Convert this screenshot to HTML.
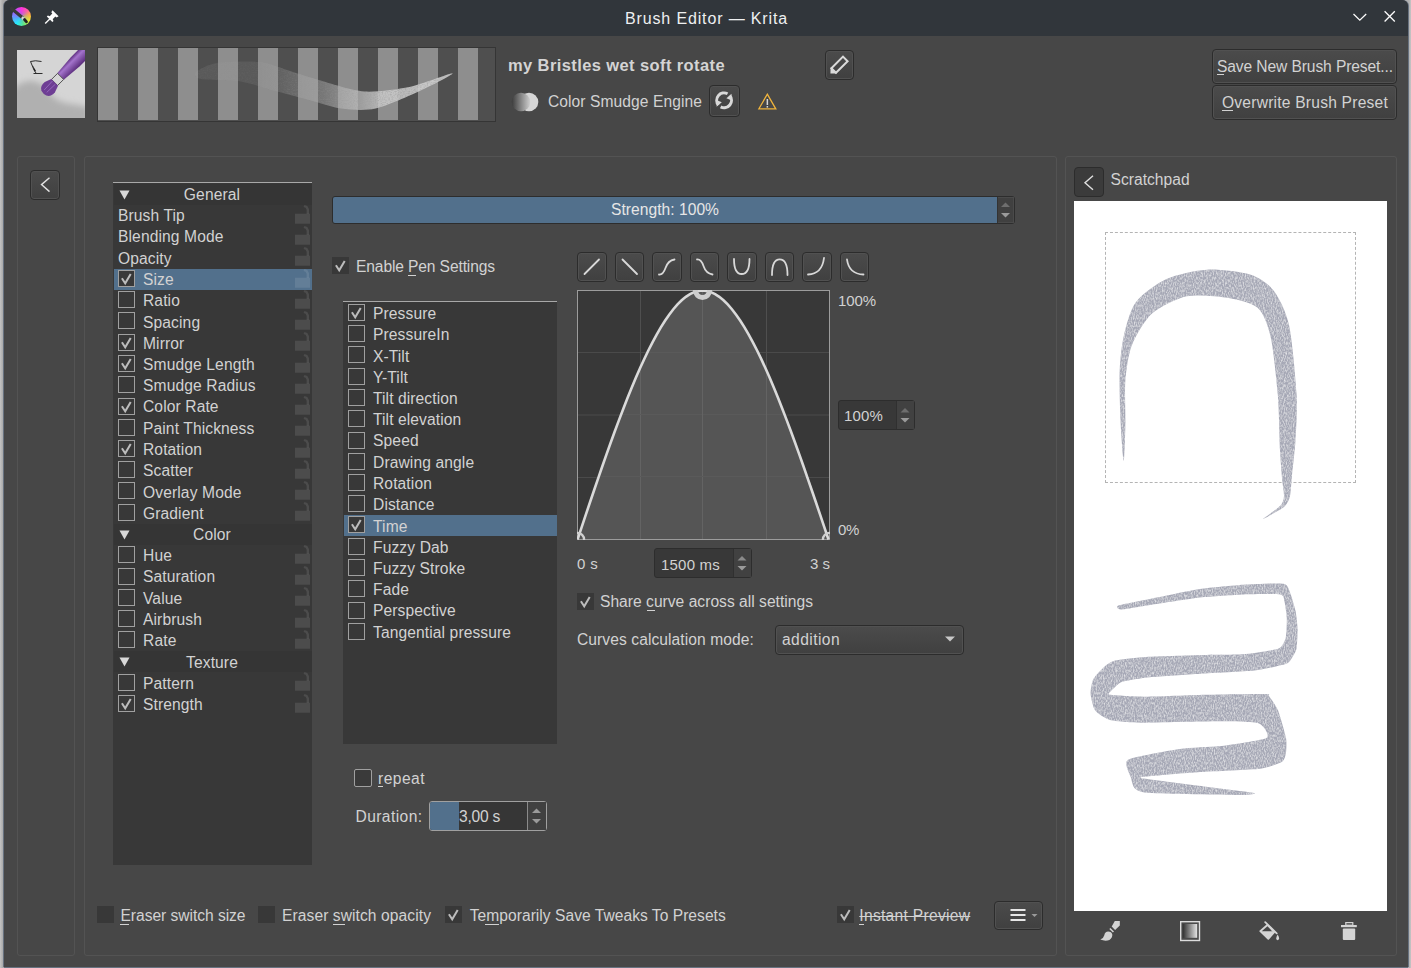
<!DOCTYPE html><html><head><meta charset="utf-8"><style>
html,body{margin:0;padding:0;}
body{width:1411px;height:968px;position:relative;overflow:hidden;background:linear-gradient(90deg,#c4c4c4 0,#a9a9a9 3px,#b0b0b0 1409px,#c6c6c6 1411px);font-family:"Liberation Sans",sans-serif;}
.t{position:absolute;white-space:nowrap;line-height:1;}
.btn{position:absolute;box-sizing:border-box;border:1px solid #2c2c2c;border-radius:4px;background:linear-gradient(#4b4b4b,#404040);box-shadow:inset 0 0 0 1px #515151;}
.cb{position:absolute;box-sizing:border-box;width:17px;height:17px;border:1px solid #a0a0a0;background:#383838;}
.cbd{position:absolute;box-sizing:border-box;width:17px;height:17px;background:#383838;}
.frame{position:absolute;box-sizing:border-box;border:1px solid #535353;border-radius:3px;}
svg{position:absolute;overflow:visible;}
.ul{position:absolute;height:1px;background:#d2d2d2;}
</style></head><body>
<div style="position:absolute;left:4px;top:0px;width:1404px;height:967px;background:#474747;border-radius:6px 6px 0 0;box-shadow:-1px 0 0 #687280, 1px 0 0 #687280, 0 1px 0 #687280;"></div>
<div style="position:absolute;left:4px;top:0px;width:1404px;height:36px;background:#31363b;border-radius:6px 6px 0 0;"></div>
<div class="t" style="left:625.00px;top:11px;font-size:16px;color:#eef0f1;font-weight:normal;letter-spacing:0.859px;">Brush Editor — Krita</div>
<div style="position:absolute;left:12px;top:7px;width:19px;height:19px;border-radius:50%;background:radial-gradient(circle at 50% 55%, rgba(90,150,230,0.55) 0, rgba(90,150,230,0) 60%),conic-gradient(#ff30e0 0deg,#ff60a0 45deg,#ffb040 80deg,#e8f030 120deg,#60f080 165deg,#20f0ff 215deg,#60a0ff 260deg,#a060ff 300deg,#ff30e0 360deg);"></div>
<svg style="left:0px;top:0px;" width="60" height="40" viewBox="0 0 60 40"><line x1="11.5" y1="8.5" x2="22" y2="17.3" stroke="#3a3a3a" stroke-width="3.2" stroke-linecap="round"/><line x1="21.8" y1="17.2" x2="24.2" y2="19.2" stroke="#d8d8d8" stroke-width="2.6"/><line x1="24.5" y1="19.5" x2="26.5" y2="21.8" stroke="#202020" stroke-width="2.8" stroke-linecap="round"/></svg>
<svg style="left:44px;top:9px;" width="16" height="16" viewBox="0 0 16 16"><path d="M8.5 1.2 L14.6 7.3 L12.6 8.6 L11.3 7.6 L8.7 10.2 L9.5 12 L8.3 13.1 L2.8 7.6 L3.9 6.4 L5.7 7.2 L8.3 4.6 L7.3 3.3 Z" fill="#fcfcfc"/><line x1="1.2" y1="14.5" x2="6" y2="9.8" stroke="#fcfcfc" stroke-width="1.4"/></svg>
<svg style="left:1350px;top:10px;" width="60" height="20" viewBox="0 0 60 20"><polyline points="3.5,4 9.8,10.2 16.2,4" fill="none" stroke="#fcfcfc" stroke-width="1.3"/><path d="M34.6 1.3 L44.8 11.5 M44.8 1.3 L34.6 11.5" stroke="#fcfcfc" stroke-width="1.3"/></svg>
<svg style="left:17px;top:50px" width="68" height="68" viewBox="0 0 68 68">
<defs>
<filter id="blur3" x="-20%" y="-20%" width="140%" height="140%"><feGaussianBlur stdDeviation="3"/></filter>
<linearGradient id="ph2" x1="0" y1="0" x2="0" y2="1"><stop offset="0" stop-color="#5e2f80"/><stop offset="0.3" stop-color="#a474cc"/><stop offset="1" stop-color="#5a2c7c"/></linearGradient><linearGradient id="ph" x1="0" y1="1" x2="1" y2="0"><stop offset="0" stop-color="#5e2f80"/><stop offset="0.45" stop-color="#9a68c2"/><stop offset="1" stop-color="#6a3a8c"/></linearGradient>
<clipPath id="tclip"><rect width="68" height="68"/></clipPath>
</defs>
<g clip-path="url(#tclip)">
<rect width="68" height="68" fill="#d5d5d5"/>
<path d="M-5 75 L-5 40 Q4 30 16 31 Q27 33 32 42 Q37 50 48 53 Q60 55 72 57 L72 75 Z" fill="#b0b0b0" filter="url(#blur3)"/>
<g transform="translate(26.5 43.5) rotate(-45)">
<path d="M24 -4.6 L45 -6.3 L75 -6.3 L75 6.3 L45 6.3 L24 4.6 Z" fill="url(#ph2)"/>
<rect x="15.6" y="-4.3" width="8.6" height="8.6" fill="#d6d6d6" stroke="#4a4a4a" stroke-width="0.9"/>
<path d="M0.5 -3.5 Q2.5 -7.8 9 -7.2 L15.8 -4.8 L15.8 4.8 L9 7.2 Q2.5 7.8 0.5 3.5 Q-0.5 0 0.5 -3.5 Z" fill="#6e3e94"/>
<path d="M3 -2 L15 -2.5 M3 1.5 L15 1.8" stroke="#9a70c0" stroke-width="0.8"/>
</g>
<path d="M13.5 11.5 Q18 10 24.5 11.5 M13.5 11.5 L17 20 L19 23 M16.5 23.5 L25.5 23.5" stroke="#1a1a1a" stroke-width="0.9" fill="none"/>
<path d="M15.5 15 L19 21 L17.5 21.5 Z" fill="#1a1a1a"/>
</g></svg>
<svg style="left:97px;top:47px" width="399" height="75" viewBox="0 0 399 75">
<defs><filter id="pgrain" x="0" y="0" width="399" height="75" filterUnits="userSpaceOnUse"><feTurbulence type="fractalNoise" baseFrequency="0.6 0.9" numOctaves="2" seed="7" result="n"/><feColorMatrix in="n" type="matrix" values="0 0 0 0 0.3  0 0 0 0 0.3  0 0 0 0 0.3  0 0 0 -1.5 0.9" result="w"/><feComposite in="w" in2="SourceGraphic" operator="in" result="wm"/><feMerge><feMergeNode in="SourceGraphic"/><feMergeNode in="wm"/></feMerge></filter><linearGradient id="sg" x1="0" y1="0" x2="1" y2="0"><stop offset="0.25" stop-color="#a8a8a8" stop-opacity="0.12"/><stop offset="0.5" stop-color="#b4b4b4" stop-opacity="0.4"/><stop offset="0.72" stop-color="#cacaca" stop-opacity="0.85"/><stop offset="0.9" stop-color="#d2d2d2" stop-opacity="0.85"/></linearGradient></defs>
<rect x="0.5" y="0.5" width="398" height="74" fill="#4f4f4f" stroke="#353535"/>
<rect x="1" y="1" width="20" height="72" fill="#8e8e8e"/><rect x="41" y="1" width="20" height="72" fill="#8e8e8e"/><rect x="81" y="1" width="20" height="72" fill="#8e8e8e"/><rect x="121" y="1" width="20" height="72" fill="#8e8e8e"/><rect x="161" y="1" width="20" height="72" fill="#8e8e8e"/><rect x="201" y="1" width="20" height="72" fill="#8e8e8e"/><rect x="241" y="1" width="20" height="72" fill="#8e8e8e"/><rect x="281" y="1" width="20" height="72" fill="#8e8e8e"/><rect x="321" y="1" width="20" height="72" fill="#8e8e8e"/><rect x="361" y="1" width="20" height="72" fill="#8e8e8e"/>
<path d="M99.0 25.0 C101.1 22.9 111.2 17.3 119.7 16.0 C128.2 14.7 153.6 14.1 163.0 15.0 C172.4 15.9 182.2 20.6 190.0 23.0 C197.8 25.4 211.4 30.1 221.7 33.0 C232.0 35.9 254.9 43.6 267.0 44.5 C279.1 45.4 300.6 42.4 312.4 40.0 C324.2 37.6 354.0 25.8 355.5 26.3 C357.0 26.8 334.1 38.7 323.8 43.4 C313.5 48.1 289.0 59.1 278.4 61.5 C267.8 63.9 253.5 62.7 244.4 61.5 C235.3 60.3 219.5 54.8 210.4 52.4 C201.3 50.0 185.5 45.8 176.4 43.4 C167.3 41.0 152.1 35.8 142.4 34.3 C132.7 32.8 109.6 33.2 103.8 32.0 C98.0 30.8 96.9 27.1 99.0 25.0 Z" fill="url(#sg)" filter="url(#pgrain)"/>
</svg>
<div class="t" style="left:508.00px;top:57px;font-size:16.5px;color:#d4d4d4;font-weight:bold;letter-spacing:0.396px;">my Bristles wet soft rotate</div>
<svg style="left:511px;top:92px" width="28" height="20" viewBox="0 0 28 20">
<defs><linearGradient id="eg" x1="0" x2="1"><stop offset="0" stop-color="#3c3c3c"/><stop offset="1" stop-color="#d0d0d0"/></linearGradient></defs>
<circle cx="18" cy="10" r="9.3" fill="#d6d6d6"/><circle cx="10" cy="10" r="9.3" fill="url(#eg)"/></svg>
<div class="t" style="left:548.00px;top:94px;font-size:15.6px;color:#d2d2d2;font-weight:normal;letter-spacing:0.075px;">Color Smudge Engine</div>
<div class="btn" style="left:825px;top:50px;width:29px;height:30px"></div>
<svg style="left:825px;top:50px;" width="29" height="30" viewBox="0 0 29 30"><path d="M6.4 18.2 L18 6.6 L22.6 11.2 L11 22.8 Z" fill="none" stroke="#dadada" stroke-width="2" stroke-linejoin="miter"/><path d="M5.4 23.6 L5.6 17.4 L11.6 23.4 Z" fill="#dadada"/></svg>
<div class="btn" style="left:709px;top:85px;width:31px;height:32px"></div>
<svg style="left:709px;top:85px;" width="31" height="32" viewBox="0 0 31 32"><path d="M18.57 8.77 A7.4 7.4 0 0 0 9.43 20.06" fill="none" stroke="#d8d8d8" stroke-width="3"/><path d="M11.63 21.83 A7.4 7.4 0 0 0 20.77 10.54" fill="none" stroke="#d8d8d8" stroke-width="3"/><path d="M7.5 21.8 L12.8 17.3 L8.6 15.6 Z" fill="#d8d8d8"/><path d="M22.7 8.8 L17.4 13.3 L21.6 15 Z" fill="#d8d8d8"/></svg>
<svg style="left:758px;top:93px;" width="19" height="17" viewBox="0 0 19 17"><path d="M9.3 1.2 L17.8 15.8 L0.9 15.8 Z" fill="none" stroke="#f0b43c" stroke-width="1.3"/><rect x="8.6" y="6" width="1.5" height="6" fill="#d8d8d8"/><rect x="8.6" y="13" width="1.5" height="1.6" fill="#d8d8d8"/></svg>
<div class="btn" style="left:1212px;top:49px;width:185px;height:35px"></div>
<div class="t" style="left:1217.00px;top:59px;font-size:15.6px;color:#d2d2d2;font-weight:normal;letter-spacing:-0.106px;">Save New Brush Preset...</div>
<div class="ul" style="left:1217px;top:74px;width:7px"></div>
<div class="btn" style="left:1212px;top:85px;width:185px;height:35px"></div>
<div class="t" style="left:1222.00px;top:95px;font-size:15.6px;color:#d2d2d2;font-weight:normal;letter-spacing:0.219px;">Overwrite Brush Preset</div>
<div class="ul" style="left:1222px;top:110px;width:11px"></div>
<div class="frame" style="left:17px;top:156px;width:58px;height:800px"></div>
<div class="frame" style="left:84px;top:156px;width:973px;height:800px"></div>
<div class="frame" style="left:1065px;top:156px;width:332px;height:800px"></div>
<div class="btn" style="left:30px;top:170px;width:30px;height:30px"></div>
<svg style="left:30px;top:170px;" width="30" height="30" viewBox="0 0 30 30"><polyline points="19.5,7.8 11.5,14.6 19.5,21.6" fill="none" stroke="#e0e0e0" stroke-width="1.4"/></svg>
<div style="position:absolute;left:113px;top:182px;width:199px;height:683px;background:#383838;box-shadow:inset 0 1px 0 #a8a8a8"></div>
<div style="position:absolute;left:114px;top:184px;width:198px;height:21px;background:#353535"></div>
<svg style="left:119px;top:189.7px;" width="11" height="10" viewBox="0 0 11 10"><path d="M0.5 0.5 H10.5 L5.5 9.5 Z" fill="#d8d8d8"/></svg>
<div class="t" style="left:212.00px;top:187px;font-size:15.6px;color:#d2d2d2;font-weight:normal;letter-spacing:0.119px;transform:translateX(-50%)">General</div>
<div class="t" style="left:118.00px;top:208px;font-size:15.6px;color:#d2d2d2;font-weight:normal;letter-spacing:0.110px;">Brush Tip</div>
<svg style="left:295px;top:205px;" width="15" height="19" viewBox="0 0 15 19"><rect x="0" y="8.7" width="15" height="10" fill="rgba(255,255,255,0.1)"/><path d="M9 1 L11.5 2 L12.8 4.5 L12.8 9" fill="none" stroke="rgba(255,255,255,0.1)" stroke-width="2.4"/></svg>
<div class="t" style="left:118.00px;top:229px;font-size:15.6px;color:#d2d2d2;font-weight:normal;letter-spacing:0.120px;">Blending Mode</div>
<svg style="left:295px;top:226px;" width="15" height="19" viewBox="0 0 15 19"><rect x="0" y="8.7" width="15" height="10" fill="rgba(255,255,255,0.1)"/><path d="M9 1 L11.5 2 L12.8 4.5 L12.8 9" fill="none" stroke="rgba(255,255,255,0.1)" stroke-width="2.4"/></svg>
<div class="t" style="left:118.00px;top:251px;font-size:15.6px;color:#d2d2d2;font-weight:normal;letter-spacing:0.113px;">Opacity</div>
<svg style="left:295px;top:247px;" width="15" height="19" viewBox="0 0 15 19"><rect x="0" y="8.7" width="15" height="10" fill="rgba(255,255,255,0.1)"/><path d="M9 1 L11.5 2 L12.8 4.5 L12.8 9" fill="none" stroke="rgba(255,255,255,0.1)" stroke-width="2.4"/></svg>
<div style="position:absolute;left:114px;top:269px;width:198px;height:21px;background:#52708c"></div>
<div class="cb" style="left:118px;top:270px"></div>
<svg style="left:118px;top:270px;" width="17" height="17" viewBox="0 0 17 17"><polyline points="3.9,8.3 7.2,13.3 12.7,3.9" fill="none" stroke="#bcbcbc" stroke-width="2"/></svg>
<div class="t" style="left:143.00px;top:272px;font-size:15.6px;color:#d2d2d2;font-weight:normal;letter-spacing:0.114px;">Size</div>
<svg style="left:295px;top:269px;" width="15" height="19" viewBox="0 0 15 19"><rect x="0" y="8.7" width="15" height="10" fill="rgba(255,255,255,0.1)"/><path d="M9 1 L11.5 2 L12.8 4.5 L12.8 9" fill="none" stroke="rgba(255,255,255,0.1)" stroke-width="2.4"/></svg>
<div class="cb" style="left:118px;top:291px"></div>
<div class="t" style="left:143.00px;top:293px;font-size:15.6px;color:#d2d2d2;font-weight:normal;letter-spacing:0.109px;">Ratio</div>
<svg style="left:295px;top:290px;" width="15" height="19" viewBox="0 0 15 19"><rect x="0" y="8.7" width="15" height="10" fill="rgba(255,255,255,0.1)"/><path d="M9 1 L11.5 2 L12.8 4.5 L12.8 9" fill="none" stroke="rgba(255,255,255,0.1)" stroke-width="2.4"/></svg>
<div class="cb" style="left:118px;top:312px"></div>
<div class="t" style="left:143.00px;top:315px;font-size:15.6px;color:#d2d2d2;font-weight:normal;letter-spacing:0.121px;">Spacing</div>
<svg style="left:295px;top:311px;" width="15" height="19" viewBox="0 0 15 19"><rect x="0" y="8.7" width="15" height="10" fill="rgba(255,255,255,0.1)"/><path d="M9 1 L11.5 2 L12.8 4.5 L12.8 9" fill="none" stroke="rgba(255,255,255,0.1)" stroke-width="2.4"/></svg>
<div class="cb" style="left:118px;top:334px"></div>
<svg style="left:118px;top:334px;" width="17" height="17" viewBox="0 0 17 17"><polyline points="3.9,8.3 7.2,13.3 12.7,3.9" fill="none" stroke="#bcbcbc" stroke-width="2"/></svg>
<div class="t" style="left:143.00px;top:336px;font-size:15.6px;color:#d2d2d2;font-weight:normal;letter-spacing:0.102px;">Mirror</div>
<svg style="left:295px;top:332px;" width="15" height="19" viewBox="0 0 15 19"><rect x="0" y="8.7" width="15" height="10" fill="rgba(255,255,255,0.1)"/><path d="M9 1 L11.5 2 L12.8 4.5 L12.8 9" fill="none" stroke="rgba(255,255,255,0.1)" stroke-width="2.4"/></svg>
<div class="cb" style="left:118px;top:355px"></div>
<svg style="left:118px;top:355px;" width="17" height="17" viewBox="0 0 17 17"><polyline points="3.9,8.3 7.2,13.3 12.7,3.9" fill="none" stroke="#bcbcbc" stroke-width="2"/></svg>
<div class="t" style="left:143.00px;top:357px;font-size:15.6px;color:#d2d2d2;font-weight:normal;letter-spacing:0.127px;">Smudge Length</div>
<svg style="left:295px;top:354px;" width="15" height="19" viewBox="0 0 15 19"><rect x="0" y="8.7" width="15" height="10" fill="rgba(255,255,255,0.1)"/><path d="M9 1 L11.5 2 L12.8 4.5 L12.8 9" fill="none" stroke="rgba(255,255,255,0.1)" stroke-width="2.4"/></svg>
<div class="cb" style="left:118px;top:376px"></div>
<div class="t" style="left:143.00px;top:378px;font-size:15.6px;color:#d2d2d2;font-weight:normal;letter-spacing:0.128px;">Smudge Radius</div>
<svg style="left:295px;top:375px;" width="15" height="19" viewBox="0 0 15 19"><rect x="0" y="8.7" width="15" height="10" fill="rgba(255,255,255,0.1)"/><path d="M9 1 L11.5 2 L12.8 4.5 L12.8 9" fill="none" stroke="rgba(255,255,255,0.1)" stroke-width="2.4"/></svg>
<div class="cb" style="left:118px;top:398px"></div>
<svg style="left:118px;top:398px;" width="17" height="17" viewBox="0 0 17 17"><polyline points="3.9,8.3 7.2,13.3 12.7,3.9" fill="none" stroke="#bcbcbc" stroke-width="2"/></svg>
<div class="t" style="left:143.00px;top:399px;font-size:15.6px;color:#d2d2d2;font-weight:normal;letter-spacing:0.112px;">Color Rate</div>
<svg style="left:295px;top:396px;" width="15" height="19" viewBox="0 0 15 19"><rect x="0" y="8.7" width="15" height="10" fill="rgba(255,255,255,0.1)"/><path d="M9 1 L11.5 2 L12.8 4.5 L12.8 9" fill="none" stroke="rgba(255,255,255,0.1)" stroke-width="2.4"/></svg>
<div class="cb" style="left:118px;top:419px"></div>
<div class="t" style="left:143.00px;top:421px;font-size:15.6px;color:#d2d2d2;font-weight:normal;letter-spacing:0.110px;">Paint Thickness</div>
<svg style="left:295px;top:417px;" width="15" height="19" viewBox="0 0 15 19"><rect x="0" y="8.7" width="15" height="10" fill="rgba(255,255,255,0.1)"/><path d="M9 1 L11.5 2 L12.8 4.5 L12.8 9" fill="none" stroke="rgba(255,255,255,0.1)" stroke-width="2.4"/></svg>
<div class="cb" style="left:118px;top:440px"></div>
<svg style="left:118px;top:440px;" width="17" height="17" viewBox="0 0 17 17"><polyline points="3.9,8.3 7.2,13.3 12.7,3.9" fill="none" stroke="#bcbcbc" stroke-width="2"/></svg>
<div class="t" style="left:143.00px;top:442px;font-size:15.6px;color:#d2d2d2;font-weight:normal;letter-spacing:0.109px;">Rotation</div>
<svg style="left:295px;top:439px;" width="15" height="19" viewBox="0 0 15 19"><rect x="0" y="8.7" width="15" height="10" fill="rgba(255,255,255,0.1)"/><path d="M9 1 L11.5 2 L12.8 4.5 L12.8 9" fill="none" stroke="rgba(255,255,255,0.1)" stroke-width="2.4"/></svg>
<div class="cb" style="left:118px;top:461px"></div>
<div class="t" style="left:143.00px;top:463px;font-size:15.6px;color:#d2d2d2;font-weight:normal;letter-spacing:0.106px;">Scatter</div>
<svg style="left:295px;top:460px;" width="15" height="19" viewBox="0 0 15 19"><rect x="0" y="8.7" width="15" height="10" fill="rgba(255,255,255,0.1)"/><path d="M9 1 L11.5 2 L12.8 4.5 L12.8 9" fill="none" stroke="rgba(255,255,255,0.1)" stroke-width="2.4"/></svg>
<div class="cb" style="left:118px;top:482px"></div>
<div class="t" style="left:143.00px;top:485px;font-size:15.6px;color:#d2d2d2;font-weight:normal;letter-spacing:0.121px;">Overlay Mode</div>
<svg style="left:295px;top:481px;" width="15" height="19" viewBox="0 0 15 19"><rect x="0" y="8.7" width="15" height="10" fill="rgba(255,255,255,0.1)"/><path d="M9 1 L11.5 2 L12.8 4.5 L12.8 9" fill="none" stroke="rgba(255,255,255,0.1)" stroke-width="2.4"/></svg>
<div class="cb" style="left:118px;top:504px"></div>
<div class="t" style="left:143.00px;top:506px;font-size:15.6px;color:#d2d2d2;font-weight:normal;letter-spacing:0.112px;">Gradient</div>
<svg style="left:295px;top:502px;" width="15" height="19" viewBox="0 0 15 19"><rect x="0" y="8.7" width="15" height="10" fill="rgba(255,255,255,0.1)"/><path d="M9 1 L11.5 2 L12.8 4.5 L12.8 9" fill="none" stroke="rgba(255,255,255,0.1)" stroke-width="2.4"/></svg>
<div style="position:absolute;left:114px;top:524px;width:198px;height:21px;background:#353535"></div>
<svg style="left:119px;top:529.7px;" width="11" height="10" viewBox="0 0 11 10"><path d="M0.5 0.5 H10.5 L5.5 9.5 Z" fill="#d8d8d8"/></svg>
<div class="t" style="left:212.00px;top:527px;font-size:15.6px;color:#d2d2d2;font-weight:normal;letter-spacing:0.112px;transform:translateX(-50%)">Color</div>
<div class="cb" style="left:118px;top:546px"></div>
<div class="t" style="left:143.00px;top:548px;font-size:15.6px;color:#d2d2d2;font-weight:normal;letter-spacing:0.143px;">Hue</div>
<svg style="left:295px;top:545px;" width="15" height="19" viewBox="0 0 15 19"><rect x="0" y="8.7" width="15" height="10" fill="rgba(255,255,255,0.1)"/><path d="M9 1 L11.5 2 L12.8 4.5 L12.8 9" fill="none" stroke="rgba(255,255,255,0.1)" stroke-width="2.4"/></svg>
<div class="cb" style="left:118px;top:568px"></div>
<div class="t" style="left:143.00px;top:569px;font-size:15.6px;color:#d2d2d2;font-weight:normal;letter-spacing:0.107px;">Saturation</div>
<svg style="left:295px;top:566px;" width="15" height="19" viewBox="0 0 15 19"><rect x="0" y="8.7" width="15" height="10" fill="rgba(255,255,255,0.1)"/><path d="M9 1 L11.5 2 L12.8 4.5 L12.8 9" fill="none" stroke="rgba(255,255,255,0.1)" stroke-width="2.4"/></svg>
<div class="cb" style="left:118px;top:589px"></div>
<div class="t" style="left:143.00px;top:591px;font-size:15.6px;color:#d2d2d2;font-weight:normal;letter-spacing:0.116px;">Value</div>
<svg style="left:295px;top:587px;" width="15" height="19" viewBox="0 0 15 19"><rect x="0" y="8.7" width="15" height="10" fill="rgba(255,255,255,0.1)"/><path d="M9 1 L11.5 2 L12.8 4.5 L12.8 9" fill="none" stroke="rgba(255,255,255,0.1)" stroke-width="2.4"/></svg>
<div class="cb" style="left:118px;top:610px"></div>
<div class="t" style="left:143.00px;top:612px;font-size:15.6px;color:#d2d2d2;font-weight:normal;letter-spacing:0.109px;">Airbrush</div>
<svg style="left:295px;top:609px;" width="15" height="19" viewBox="0 0 15 19"><rect x="0" y="8.7" width="15" height="10" fill="rgba(255,255,255,0.1)"/><path d="M9 1 L11.5 2 L12.8 4.5 L12.8 9" fill="none" stroke="rgba(255,255,255,0.1)" stroke-width="2.4"/></svg>
<div class="cb" style="left:118px;top:631px"></div>
<div class="t" style="left:143.00px;top:633px;font-size:15.6px;color:#d2d2d2;font-weight:normal;letter-spacing:0.124px;">Rate</div>
<svg style="left:295px;top:630px;" width="15" height="19" viewBox="0 0 15 19"><rect x="0" y="8.7" width="15" height="10" fill="rgba(255,255,255,0.1)"/><path d="M9 1 L11.5 2 L12.8 4.5 L12.8 9" fill="none" stroke="rgba(255,255,255,0.1)" stroke-width="2.4"/></svg>
<div style="position:absolute;left:114px;top:651px;width:198px;height:21px;background:#353535"></div>
<svg style="left:119px;top:657.2px;" width="11" height="10" viewBox="0 0 11 10"><path d="M0.5 0.5 H10.5 L5.5 9.5 Z" fill="#d8d8d8"/></svg>
<div class="t" style="left:212.00px;top:655px;font-size:15.6px;color:#d2d2d2;font-weight:normal;letter-spacing:0.110px;transform:translateX(-50%)">Texture</div>
<div class="cb" style="left:118px;top:674px"></div>
<div class="t" style="left:143.00px;top:676px;font-size:15.6px;color:#d2d2d2;font-weight:normal;letter-spacing:0.108px;">Pattern</div>
<svg style="left:295px;top:672px;" width="15" height="19" viewBox="0 0 15 19"><rect x="0" y="8.7" width="15" height="10" fill="rgba(255,255,255,0.1)"/><path d="M9 1 L11.5 2 L12.8 4.5 L12.8 9" fill="none" stroke="rgba(255,255,255,0.1)" stroke-width="2.4"/></svg>
<div class="cb" style="left:118px;top:695px"></div>
<svg style="left:118px;top:695px;" width="17" height="17" viewBox="0 0 17 17"><polyline points="3.9,8.3 7.2,13.3 12.7,3.9" fill="none" stroke="#bcbcbc" stroke-width="2"/></svg>
<div class="t" style="left:143.00px;top:697px;font-size:15.6px;color:#d2d2d2;font-weight:normal;letter-spacing:0.111px;">Strength</div>
<svg style="left:295px;top:694px;" width="15" height="19" viewBox="0 0 15 19"><rect x="0" y="8.7" width="15" height="10" fill="rgba(255,255,255,0.1)"/><path d="M9 1 L11.5 2 L12.8 4.5 L12.8 9" fill="none" stroke="rgba(255,255,255,0.1)" stroke-width="2.4"/></svg>
<div style="position:absolute;left:332px;top:196px;width:683px;height:28px;box-sizing:border-box;border:1px solid #2d2d2d;border-radius:3px;background:#3a3a3a"></div>
<div style="position:absolute;left:333px;top:197px;width:664px;height:26px;background:#52708c;border-radius:2px 0 0 2px"></div>
<div style="position:absolute;left:997px;top:197px;width:17px;height:26px;background:#404040;box-shadow:inset 1px 0 0 #333, inset 0 0 0 1px #4a4a4a"></div>
<svg style="left:997px;top:197px;" width="17" height="26" viewBox="0 0 17 26"><path d="M4 10 L8.5 5.5 L13 10 Z" fill="#6e6e6e"/><path d="M4 16 L13 16 L8.5 20.5 Z" fill="#9a9a9a"/></svg>
<div class="t" style="left:611.00px;top:202px;font-size:15.6px;color:#e6e6e6;font-weight:normal;letter-spacing:0.036px;">Strength: 100%</div>
<div class="cbd" style="left:332px;top:257px"></div>
<svg style="left:332px;top:257px;" width="17" height="17" viewBox="0 0 17 17"><polyline points="3.9,8.3 7.2,13.3 12.7,3.9" fill="none" stroke="#bcbcbc" stroke-width="2"/></svg>
<div class="t" style="left:356.00px;top:259px;font-size:15.6px;color:#d2d2d2;font-weight:normal;letter-spacing:-0.122px;">Enable Pen Settings</div>
<div class="ul" style="left:408px;top:275px;width:8px"></div>
<div style="position:absolute;left:343px;top:301px;width:214px;height:443px;background:#383838;box-shadow:inset 0 1px 0 #a8a8a8"></div>
<div class="cb" style="left:348px;top:304px"></div>
<svg style="left:348px;top:304px;" width="17" height="17" viewBox="0 0 17 17"><polyline points="3.9,8.3 7.2,13.3 12.7,3.9" fill="none" stroke="#bcbcbc" stroke-width="2"/></svg>
<div class="t" style="left:373.00px;top:306px;font-size:15.6px;color:#d2d2d2;font-weight:normal;letter-spacing:0.117px;">Pressure</div>
<div class="cb" style="left:348px;top:325px"></div>
<div class="t" style="left:373.00px;top:327px;font-size:15.6px;color:#d2d2d2;font-weight:normal;letter-spacing:0.113px;">PressureIn</div>
<div class="cb" style="left:348px;top:346px"></div>
<div class="t" style="left:373.00px;top:349px;font-size:15.6px;color:#d2d2d2;font-weight:normal;letter-spacing:0.090px;">X-Tilt</div>
<div class="cb" style="left:348px;top:368px"></div>
<div class="t" style="left:373.00px;top:370px;font-size:15.6px;color:#d2d2d2;font-weight:normal;letter-spacing:0.086px;">Y-Tilt</div>
<div class="cb" style="left:348px;top:389px"></div>
<div class="t" style="left:373.00px;top:391px;font-size:15.6px;color:#d2d2d2;font-weight:normal;letter-spacing:0.089px;">Tilt direction</div>
<div class="cb" style="left:348px;top:410px"></div>
<div class="t" style="left:373.00px;top:412px;font-size:15.6px;color:#d2d2d2;font-weight:normal;letter-spacing:0.093px;">Tilt elevation</div>
<div class="cb" style="left:348px;top:432px"></div>
<div class="t" style="left:373.00px;top:433px;font-size:15.6px;color:#d2d2d2;font-weight:normal;letter-spacing:0.135px;">Speed</div>
<div class="cb" style="left:348px;top:453px"></div>
<div class="t" style="left:373.00px;top:455px;font-size:15.6px;color:#d2d2d2;font-weight:normal;letter-spacing:0.115px;">Drawing angle</div>
<div class="cb" style="left:348px;top:474px"></div>
<div class="t" style="left:373.00px;top:476px;font-size:15.6px;color:#d2d2d2;font-weight:normal;letter-spacing:0.109px;">Rotation</div>
<div class="cb" style="left:348px;top:495px"></div>
<div class="t" style="left:373.00px;top:497px;font-size:15.6px;color:#d2d2d2;font-weight:normal;letter-spacing:0.114px;">Distance</div>
<div style="position:absolute;left:344px;top:515px;width:213px;height:21px;background:#52708c"></div>
<div class="cb" style="left:348px;top:516px"></div>
<svg style="left:348px;top:516px;" width="17" height="17" viewBox="0 0 17 17"><polyline points="3.9,8.3 7.2,13.3 12.7,3.9" fill="none" stroke="#bcbcbc" stroke-width="2"/></svg>
<div class="t" style="left:373.00px;top:519px;font-size:15.6px;color:#d2d2d2;font-weight:normal;letter-spacing:0.128px;">Time</div>
<div class="cb" style="left:348px;top:538px"></div>
<div class="t" style="left:373.00px;top:540px;font-size:15.6px;color:#d2d2d2;font-weight:normal;letter-spacing:0.124px;">Fuzzy Dab</div>
<div class="cb" style="left:348px;top:559px"></div>
<div class="t" style="left:373.00px;top:561px;font-size:15.6px;color:#d2d2d2;font-weight:normal;letter-spacing:0.114px;">Fuzzy Stroke</div>
<div class="cb" style="left:348px;top:580px"></div>
<div class="t" style="left:373.00px;top:582px;font-size:15.6px;color:#d2d2d2;font-weight:normal;letter-spacing:0.133px;">Fade</div>
<div class="cb" style="left:348px;top:602px"></div>
<div class="t" style="left:373.00px;top:603px;font-size:15.6px;color:#d2d2d2;font-weight:normal;letter-spacing:0.111px;">Perspective</div>
<div class="cb" style="left:348px;top:623px"></div>
<div class="t" style="left:373.00px;top:625px;font-size:15.6px;color:#d2d2d2;font-weight:normal;letter-spacing:0.107px;">Tangential pressure</div>
<div class="btn" style="left:577.0px;top:252px;width:29.5px;height:29.5px"></div>
<svg style="left:577.0px;top:252px;" width="30" height="30" viewBox="0 0 30 30"><g fill="none" stroke="#d8d8d8" stroke-width="1.8" stroke-linecap="round"><line x1="7.5" y1="22" x2="22" y2="7.5"/></g></svg>
<div class="btn" style="left:614.5px;top:252px;width:29.5px;height:29.5px"></div>
<svg style="left:614.5px;top:252px;" width="30" height="30" viewBox="0 0 30 30"><g fill="none" stroke="#d8d8d8" stroke-width="1.8" stroke-linecap="round"><line x1="7.5" y1="7.5" x2="22" y2="22"/></g></svg>
<div class="btn" style="left:652.0px;top:252px;width:29.5px;height:29.5px"></div>
<svg style="left:652.0px;top:252px;" width="30" height="30" viewBox="0 0 30 30"><g fill="none" stroke="#d8d8d8" stroke-width="1.8" stroke-linecap="round"><path d="M7 22.5 Q11 23 13.5 16 Q16 8.5 22.5 7.5"/></g></svg>
<div class="btn" style="left:689.5px;top:252px;width:29.5px;height:29.5px"></div>
<svg style="left:689.5px;top:252px;" width="30" height="30" viewBox="0 0 30 30"><g fill="none" stroke="#d8d8d8" stroke-width="1.8" stroke-linecap="round"><path d="M7 7.5 Q11 7 13.5 14 Q16 21.5 22.5 22.5"/></g></svg>
<div class="btn" style="left:727.0px;top:252px;width:29.5px;height:29.5px"></div>
<svg style="left:727.0px;top:252px;" width="30" height="30" viewBox="0 0 30 30"><g fill="none" stroke="#d8d8d8" stroke-width="1.8" stroke-linecap="round"><path d="M7 7 Q7 22 14.7 22 Q22.5 22 22.5 7"/></g></svg>
<div class="btn" style="left:764.5px;top:252px;width:29.5px;height:29.5px"></div>
<svg style="left:764.5px;top:252px;" width="30" height="30" viewBox="0 0 30 30"><g fill="none" stroke="#d8d8d8" stroke-width="1.8" stroke-linecap="round"><path d="M7 23 Q7 7.3 14.7 7.3 Q22.5 7.3 22.5 23"/></g></svg>
<div class="btn" style="left:802.0px;top:252px;width:29.5px;height:29.5px"></div>
<svg style="left:802.0px;top:252px;" width="30" height="30" viewBox="0 0 30 30"><g fill="none" stroke="#d8d8d8" stroke-width="1.8" stroke-linecap="round"><path d="M6 22.5 Q20 22 22 6"/></g></svg>
<div class="btn" style="left:839.5px;top:252px;width:29.5px;height:29.5px"></div>
<svg style="left:839.5px;top:252px;" width="30" height="30" viewBox="0 0 30 30"><g fill="none" stroke="#d8d8d8" stroke-width="1.8" stroke-linecap="round"><path d="M7 7.5 Q9 22 23.5 22.5"/></g></svg>
<svg style="left:577px;top:290px" width="253" height="250" viewBox="0 0 253 250">
<defs><clipPath id="cc"><rect width="253" height="250"/></clipPath><clipPath id="under"><path d="M0.50 249.50 L4.67 237.05 L8.83 224.64 L13.00 212.27 L17.17 200.00 L21.33 187.83 L25.50 175.80 L29.67 163.93 L33.83 152.26 L38.00 140.81 L42.17 129.61 L46.33 118.69 L50.50 108.07 L54.67 97.78 L58.83 87.85 L63.00 78.31 L67.17 69.19 L71.33 60.50 L75.50 52.29 L79.67 44.58 L83.83 37.39 L88.00 30.75 L92.17 24.70 L96.33 19.25 L100.50 14.44 L104.67 10.30 L108.83 6.84 L113.00 4.11 L117.17 2.12 L121.33 0.91 L125.50 0.50 L129.70 0.91 L133.90 2.12 L138.10 4.11 L142.30 6.84 L146.50 10.30 L150.70 14.44 L154.90 19.25 L159.10 24.70 L163.30 30.75 L167.50 37.39 L171.70 44.58 L175.90 52.29 L180.10 60.50 L184.30 69.19 L188.50 78.31 L192.70 87.85 L196.90 97.78 L201.10 108.07 L205.30 118.69 L209.50 129.61 L213.70 140.81 L217.90 152.26 L222.10 163.93 L226.30 175.80 L230.50 187.83 L234.70 200.00 L238.90 212.27 L243.10 224.64 L247.30 237.05 L251.50 249.50 L253 250 L0 250 Z"/></clipPath></defs>
<g clip-path="url(#cc)">
<rect width="253" height="250" fill="#383838"/>
<line x1="0" y1="62.5" x2="253" y2="62.5" stroke="#4a4a4a"/><line x1="0" y1="125.0" x2="253" y2="125.0" stroke="#4a4a4a"/><line x1="0" y1="187.5" x2="253" y2="187.5" stroke="#4a4a4a"/>
<line x1="63.5" y1="0" x2="63.5" y2="250" stroke="#4f4f4f" stroke-width="1"/><line x1="125.5" y1="0" x2="125.5" y2="250" stroke="#4f4f4f" stroke-width="1"/><line x1="189.5" y1="0" x2="189.5" y2="250" stroke="#4f4f4f" stroke-width="1"/>
<path d="M0.50 249.50 L4.67 237.05 L8.83 224.64 L13.00 212.27 L17.17 200.00 L21.33 187.83 L25.50 175.80 L29.67 163.93 L33.83 152.26 L38.00 140.81 L42.17 129.61 L46.33 118.69 L50.50 108.07 L54.67 97.78 L58.83 87.85 L63.00 78.31 L67.17 69.19 L71.33 60.50 L75.50 52.29 L79.67 44.58 L83.83 37.39 L88.00 30.75 L92.17 24.70 L96.33 19.25 L100.50 14.44 L104.67 10.30 L108.83 6.84 L113.00 4.11 L117.17 2.12 L121.33 0.91 L125.50 0.50 L129.70 0.91 L133.90 2.12 L138.10 4.11 L142.30 6.84 L146.50 10.30 L150.70 14.44 L154.90 19.25 L159.10 24.70 L163.30 30.75 L167.50 37.39 L171.70 44.58 L175.90 52.29 L180.10 60.50 L184.30 69.19 L188.50 78.31 L192.70 87.85 L196.90 97.78 L201.10 108.07 L205.30 118.69 L209.50 129.61 L213.70 140.81 L217.90 152.26 L222.10 163.93 L226.30 175.80 L230.50 187.83 L234.70 200.00 L238.90 212.27 L243.10 224.64 L247.30 237.05 L251.50 249.50 L253 250 L0 250 Z" fill="#555555"/>
<g clip-path="url(#under)"><line x1="0" y1="62.5" x2="253" y2="62.5" stroke="#5a5a5a" stroke-width="1"/><line x1="63.5" y1="0" x2="63.5" y2="250" stroke="#636363" stroke-width="1"/><line x1="0" y1="124.5" x2="253" y2="124.5" stroke="#5a5a5a" stroke-width="1"/><line x1="125.5" y1="0" x2="125.5" y2="250" stroke="#636363" stroke-width="1"/><line x1="0" y1="186.5" x2="253" y2="186.5" stroke="#5a5a5a" stroke-width="1"/><line x1="189.5" y1="0" x2="189.5" y2="250" stroke="#636363" stroke-width="1"/></g>
<rect x="0.5" y="0.5" width="252" height="249" fill="none" stroke="#9c9c9c" stroke-width="1"/>
<path d="M0.50 249.50 L4.67 237.05 L8.83 224.64 L13.00 212.27 L17.17 200.00 L21.33 187.83 L25.50 175.80 L29.67 163.93 L33.83 152.26 L38.00 140.81 L42.17 129.61 L46.33 118.69 L50.50 108.07 L54.67 97.78 L58.83 87.85 L63.00 78.31 L67.17 69.19 L71.33 60.50 L75.50 52.29 L79.67 44.58 L83.83 37.39 L88.00 30.75 L92.17 24.70 L96.33 19.25 L100.50 14.44 L104.67 10.30 L108.83 6.84 L113.00 4.11 L117.17 2.12 L121.33 0.91 L125.50 0.50 L129.70 0.91 L133.90 2.12 L138.10 4.11 L142.30 6.84 L146.50 10.30 L150.70 14.44 L154.90 19.25 L159.10 24.70 L163.30 30.75 L167.50 37.39 L171.70 44.58 L175.90 52.29 L180.10 60.50 L184.30 69.19 L188.50 78.31 L192.70 87.85 L196.90 97.78 L201.10 108.07 L205.30 118.69 L209.50 129.61 L213.70 140.81 L217.90 152.26 L222.10 163.93 L226.30 175.80 L230.50 187.83 L234.70 200.00 L238.90 212.27 L243.10 224.64 L247.30 237.05 L251.50 249.50" fill="none" stroke="#dadada" stroke-width="2.6"/>
<circle cx="125.5" cy="0.5" r="7" fill="none" stroke="#cdcdcd" stroke-width="5"/>
<circle cx="0.5" cy="249.5" r="6.6" fill="none" stroke="#d0d0d0" stroke-width="2.3"/>
<circle cx="252.5" cy="249.5" r="6.6" fill="none" stroke="#d0d0d0" stroke-width="2.3"/>
</g></svg>
<div class="t" style="left:838.00px;top:293px;font-size:15px;color:#d2d2d2;font-weight:normal;letter-spacing:-0.094px;">100%</div>
<div class="t" style="left:838.00px;top:522px;font-size:15px;color:#d2d2d2;font-weight:normal;letter-spacing:-0.344px;">0%</div>
<div style="position:absolute;left:838px;top:400px;width:77px;height:30px;box-sizing:border-box;border:1px solid #2d2d2d;border-radius:3px;background:#383838"></div>
<div style="position:absolute;left:896px;top:401px;width:18px;height:28px;background:#414141;box-shadow:inset 1px 0 0 #303030"></div>
<svg style="left:896px;top:401px;" width="18" height="28" viewBox="0 0 18 28"><path d="M4.5 11.5 L9 7 L13.5 11.5 Z" fill="#6e6e6e"/><path d="M4.5 17 L13.5 17 L9 21.5 Z" fill="#9a9a9a"/></svg>
<div class="t" style="left:844.00px;top:408px;font-size:15px;color:#d2d2d2;font-weight:normal;letter-spacing:0.156px;">100%</div>
<div class="t" style="left:577.00px;top:556px;font-size:15px;color:#d2d2d2;font-weight:normal;letter-spacing:0.328px;">0 s</div>
<div class="t" style="left:810.00px;top:556px;font-size:15px;color:#d2d2d2;font-weight:normal;letter-spacing:-0.005px;">3 s</div>
<div style="position:absolute;left:654px;top:548px;width:98px;height:30px;box-sizing:border-box;border:1px solid #2d2d2d;border-radius:3px;background:#383838"></div>
<div style="position:absolute;left:733px;top:549px;width:18px;height:28px;background:#414141;box-shadow:inset 1px 0 0 #303030"></div>
<svg style="left:733px;top:549px;" width="18" height="28" viewBox="0 0 18 28"><path d="M4.5 11.5 L9 7 L13.5 11.5 Z" fill="#8a8a8a"/><path d="M4.5 17 L13.5 17 L9 21.5 Z" fill="#9a9a9a"/></svg>
<div class="t" style="left:661.00px;top:557px;font-size:15px;color:#d2d2d2;font-weight:normal;letter-spacing:0.208px;">1500 ms</div>
<div class="cbd" style="left:577px;top:593px"></div>
<svg style="left:577px;top:593px;" width="17" height="17" viewBox="0 0 17 17"><polyline points="3.9,8.3 7.2,13.3 12.7,3.9" fill="none" stroke="#bcbcbc" stroke-width="2"/></svg>
<div class="t" style="left:600.00px;top:594px;font-size:15.6px;color:#d2d2d2;font-weight:normal;letter-spacing:0.021px;">Share curve across all settings</div>
<div class="ul" style="left:647px;top:610px;width:8px"></div>
<div class="t" style="left:577.00px;top:632px;font-size:15.6px;color:#d2d2d2;font-weight:normal;letter-spacing:0.079px;">Curves calculation mode:</div>
<div class="btn" style="left:775px;top:625px;width:189px;height:30px"></div>
<div class="t" style="left:782.00px;top:632px;font-size:15.6px;color:#d2d2d2;font-weight:normal;letter-spacing:0.422px;">addition</div>
<svg style="left:944px;top:635px;" width="12" height="8" viewBox="0 0 12 8"><path d="M1 1.5 L11 1.5 L6 6.5 Z" fill="#c8c8c8"/></svg>
<div style="position:absolute;left:354px;top:769px;width:18px;height:18px;box-sizing:border-box;border:1px solid #a0a0a0;border-radius:2px;background:#3a3a3a"></div>
<div class="t" style="left:378.00px;top:771px;font-size:15.6px;color:#d2d2d2;font-weight:normal;letter-spacing:0.464px;">repeat</div>
<div class="ul" style="left:378px;top:786px;width:5px"></div>
<div class="t" style="left:355.50px;top:809px;font-size:15.6px;color:#d2d2d2;font-weight:normal;letter-spacing:0.413px;">Duration:</div>
<div style="position:absolute;left:429px;top:801px;width:118px;height:30px;box-sizing:border-box;border:1px solid #a0a0a0;border-radius:3px;background:#363636"></div>
<div style="position:absolute;left:430px;top:802px;width:29px;height:28px;background:#52708c;border-radius:2px 0 0 2px"></div>
<div style="position:absolute;left:527px;top:802px;width:19px;height:28px;background:#404040;box-shadow:inset 1px 0 0 #8a8a8a"></div>
<svg style="left:527px;top:802px;" width="19" height="28" viewBox="0 0 19 28"><path d="M5 11 L9.5 6.5 L14 11 Z" fill="#9a9a9a"/><path d="M5 17 L14 17 L9.5 21.5 Z" fill="#9a9a9a"/></svg>
<div class="t" style="left:459.00px;top:809px;font-size:15.6px;color:#d2d2d2;font-weight:normal;letter-spacing:-0.247px;">3,00 s</div>
<div class="cbd" style="left:97px;top:906px"></div>
<div class="t" style="left:120.50px;top:908px;font-size:15.6px;color:#d2d2d2;font-weight:normal;letter-spacing:-0.036px;">Eraser switch size</div>
<div class="ul" style="left:120px;top:924px;width:9px"></div>
<div class="cbd" style="left:258px;top:906px"></div>
<div class="t" style="left:282.00px;top:908px;font-size:15.6px;color:#d2d2d2;font-weight:normal;letter-spacing:0.080px;">Eraser switch opacity</div>
<div class="ul" style="left:333px;top:924px;width:12px"></div>
<div class="cbd" style="left:445px;top:906px"></div>
<svg style="left:445px;top:906px;" width="17" height="17" viewBox="0 0 17 17"><polyline points="3.9,8.3 7.2,13.3 12.7,3.9" fill="none" stroke="#bcbcbc" stroke-width="2"/></svg>
<div class="t" style="left:469.80px;top:908px;font-size:15.6px;color:#d2d2d2;font-weight:normal;letter-spacing:0.026px;">Temporarily Save Tweaks To Presets</div>
<div class="ul" style="left:485px;top:924px;width:14px"></div>
<div class="cbd" style="left:837px;top:906px"></div>
<svg style="left:837px;top:906px;" width="17" height="17" viewBox="0 0 17 17"><polyline points="3.9,8.3 7.2,13.3 12.7,3.9" fill="none" stroke="#bcbcbc" stroke-width="2"/></svg>
<div class="t" style="left:859.30px;top:908px;font-size:15.6px;color:#d2d2d2;font-weight:normal;letter-spacing:0.293px;text-decoration:line-through;text-decoration-thickness:1px;">Instant Preview</div>
<div class="ul" style="left:859px;top:924px;width:5px"></div>
<div class="btn" style="left:994px;top:901px;width:49px;height:29px"></div>
<svg style="left:994px;top:901px;" width="49" height="29" viewBox="0 0 49 29"><g fill="#e6e6e6"><rect x="16.5" y="8" width="15" height="2"/><rect x="16.5" y="13" width="15" height="2"/><rect x="16.5" y="18" width="15" height="2"/></g><path d="M37.5 13 L43.5 13 L40.5 16 Z" fill="#9a9a9a"/></svg>
<div class="btn" style="left:1074px;top:167px;width:30px;height:30px;background:#3b3b3b;box-shadow:none"></div>
<svg style="left:1074px;top:167px;" width="30" height="30" viewBox="0 0 30 30"><polyline points="19,8.8 11,15.8 19,22.8" fill="none" stroke="#e0e0e0" stroke-width="1.4"/></svg>
<div class="t" style="left:1110.60px;top:172px;font-size:15.6px;color:#d2d2d2;font-weight:normal;letter-spacing:0.011px;">Scratchpad</div>
<div style="position:absolute;left:1074px;top:201px;width:313px;height:710px;background:#ffffff"></div>
<div style="position:absolute;left:1105px;top:232px;width:251px;height:251px;box-sizing:border-box;border:1px dashed #b4b4b4"></div>
<svg style="left:0;top:0" width="1411" height="968" viewBox="0 0 1411 968">
<defs><filter id="grain" x="1080" y="250" width="240" height="560" filterUnits="userSpaceOnUse"><feTurbulence type="fractalNoise" baseFrequency="0.9 0.4" numOctaves="2" seed="3" result="n"/><feColorMatrix in="n" type="matrix" values="0 0 0 0 1  0 0 0 0 1  0 0 0 0 1  0 0 0 -1.2 0.75" result="w"/><feComposite in="w" in2="SourceGraphic" operator="in" result="wm"/><feMerge><feMergeNode in="SourceGraphic"/><feMergeNode in="wm"/></feMerge></filter></defs>
<g filter="url(#grain)">
<path d="M1123.7 461.0 C1123.0 460.5 1121.0 432.1 1120.5 420.0 C1120.0 407.9 1119.2 381.3 1119.7 370.0 C1120.2 358.7 1121.8 344.1 1124.0 335.0 C1126.2 325.9 1130.3 309.5 1136.0 302.0 C1141.7 294.5 1157.0 283.3 1166.5 279.0 C1176.0 274.7 1195.9 270.3 1207.0 269.7 C1218.1 269.1 1241.1 271.8 1250.0 274.6 C1258.9 277.4 1268.3 283.8 1273.5 290.5 C1278.7 297.2 1285.9 311.1 1289.0 325.0 C1292.1 338.9 1295.7 379.2 1296.6 394.5 C1297.5 409.8 1296.1 429.3 1295.5 440.0 C1294.9 450.7 1292.7 467.5 1292.0 475.0 C1291.3 482.5 1290.9 491.9 1290.0 496.0 C1289.1 500.1 1287.1 503.7 1285.0 506.0 C1282.9 508.3 1276.9 511.3 1274.0 513.0 C1271.1 514.7 1263.4 519.0 1263.0 519.0 C1262.6 519.0 1268.6 514.9 1271.0 513.0 C1273.4 511.1 1279.3 507.3 1281.0 505.0 C1282.7 502.7 1283.9 499.6 1284.0 496.0 C1284.1 492.4 1282.5 484.1 1282.0 478.0 C1281.5 471.9 1280.6 461.1 1280.0 450.0 C1279.4 438.9 1279.1 409.6 1277.8 394.5 C1276.5 379.4 1273.3 348.3 1270.6 336.7 C1267.9 325.1 1263.4 313.0 1257.6 307.8 C1251.8 302.6 1236.7 299.2 1227.2 297.7 C1217.7 296.2 1196.7 294.2 1186.7 296.3 C1176.7 298.4 1159.3 307.1 1152.0 313.6 C1144.7 320.1 1135.3 336.5 1131.8 345.4 C1128.3 354.3 1126.3 369.6 1125.4 380.0 C1124.5 390.4 1125.6 412.7 1125.4 423.5 C1125.2 434.3 1124.4 461.5 1123.7 461.0 Z" fill="#a6a8b6"/>
<path d="M1118.5 605.5 C1121.4 604.5 1141.8 600.6 1150.0 599.0 C1158.2 597.4 1190.7 590.5 1200.0 589.1 C1209.3 587.7 1235.1 585.3 1243.4 584.8 C1251.8 584.3 1278.8 582.9 1283.5 583.7 C1288.2 584.5 1288.8 589.7 1290.0 592.4 C1291.2 595.1 1294.7 607.1 1295.5 610.8 C1296.3 614.5 1297.5 625.4 1297.6 629.2 C1297.7 633.0 1297.0 646.0 1296.5 648.8 C1296.0 651.6 1293.3 655.9 1292.2 657.4 C1291.1 658.9 1289.5 662.7 1285.7 664.0 C1281.9 665.3 1262.8 669.5 1254.2 670.5 C1245.6 671.5 1210.4 673.0 1200.0 673.7 C1189.6 674.4 1157.8 676.4 1150.0 677.2 C1142.2 678.0 1126.1 680.4 1122.2 681.8 C1118.3 683.2 1112.2 689.8 1111.0 691.1 C1109.8 692.4 1106.6 694.2 1110.0 694.8 C1113.4 695.4 1135.9 696.7 1145.4 696.7 C1154.9 696.7 1192.8 695.1 1204.9 694.8 C1217.0 694.5 1260.1 693.9 1266.5 694.0 C1272.9 694.1 1267.5 693.9 1268.6 695.5 C1269.7 697.1 1276.2 705.8 1277.9 710.0 C1279.6 714.2 1285.2 733.7 1286.0 737.9 C1286.8 742.1 1286.4 750.0 1286.0 752.4 C1285.6 754.8 1284.6 760.1 1282.0 761.7 C1279.4 763.3 1268.2 767.7 1260.0 768.7 C1251.8 769.7 1211.4 771.2 1200.0 772.0 C1188.6 772.8 1151.4 775.9 1145.8 776.6 C1140.2 777.3 1138.0 777.6 1143.8 778.6 C1149.6 779.6 1193.0 785.1 1204.0 786.5 C1215.0 787.9 1250.5 792.1 1254.0 793.0 C1257.5 793.9 1249.4 795.0 1239.0 795.0 C1228.6 795.0 1160.2 793.6 1149.8 793.0 C1139.4 792.4 1136.8 790.0 1134.9 788.5 C1133.0 787.0 1131.6 780.5 1130.9 777.6 C1130.2 774.7 1123.1 762.7 1128.0 759.8 C1132.9 756.9 1170.8 750.4 1180.0 749.0 C1189.2 747.6 1211.3 747.2 1220.0 746.1 C1228.7 745.0 1262.6 740.2 1266.5 737.9 C1270.4 735.6 1263.7 725.1 1259.0 723.4 C1254.3 721.7 1231.8 721.4 1220.0 721.3 C1208.2 721.2 1151.8 722.8 1140.8 722.7 C1129.8 722.6 1114.6 721.2 1110.0 720.0 C1105.4 718.8 1097.1 713.2 1095.2 710.6 C1093.3 708.0 1090.8 697.1 1090.6 693.9 C1090.4 690.7 1091.8 681.9 1093.4 679.0 C1095.0 676.1 1104.0 666.9 1106.4 665.0 C1108.8 663.1 1113.1 660.8 1117.5 660.0 C1121.9 659.2 1141.3 657.2 1150.0 656.7 C1158.7 656.2 1195.6 655.1 1204.9 654.9 C1214.2 654.6 1236.1 654.8 1243.4 654.2 C1250.7 653.6 1273.9 650.4 1278.1 648.8 C1282.3 647.2 1284.8 640.9 1285.7 637.9 C1286.6 634.9 1286.9 622.0 1286.8 618.4 C1286.7 614.8 1285.2 604.5 1284.6 602.1 C1283.9 599.7 1284.4 595.3 1280.3 594.5 C1276.2 593.7 1251.4 594.2 1243.4 594.5 C1235.4 594.8 1209.3 596.5 1200.0 597.5 C1190.7 598.5 1157.9 603.8 1150.0 605.0 C1142.1 606.2 1124.2 609.5 1121.0 609.5 C1117.8 609.5 1115.6 606.5 1118.5 605.5 Z" fill="#a6a8b6"/>
</g></svg>
<svg style="left:1100px;top:921px;" width="21" height="21" viewBox="0 0 21 21"><path d="M14.8 0 L19.8 0 L19.8 4.6 L15.1 8.9 L11.7 5.5 Z" fill="#d4d4d4"/><path d="M10.4 6.9 L14 10.5 L12.9 11.6 L9.3 8 Z" fill="#d4d4d4"/><path d="M0.3 18.6 Q3.5 17.5 4.3 14.2 Q5 10.8 8.2 10.6 Q11.6 10.6 12.3 13.6 Q12.6 17 9.4 18.9 Q5.5 20.6 0.3 18.6 Z" fill="#d4d4d4"/></svg>
<svg style="left:1180px;top:921px;" width="21" height="21" viewBox="0 0 21 21"><defs><linearGradient id="gr" x1="0" x2="1"><stop offset="0.05" stop-color="#383838"/><stop offset="0.95" stop-color="#dadada"/></linearGradient></defs><rect x="0.7" y="0.7" width="18.8" height="18.8" fill="#4a4a4a" stroke="#dcdcdc" stroke-width="1.4"/><rect x="2.6" y="3" width="14.6" height="13.8" fill="url(#gr)"/></svg>
<svg style="left:1260px;top:921px;" width="21" height="21" viewBox="0 0 21 21"><path d="M0.3 10.2 L7.4 4 L14.2 11.1 L8.3 17.9 Z" fill="none" stroke="#d4d4d4" stroke-width="1.8" stroke-linejoin="round"/><path d="M0.3 10.2 L14.2 10.2 L8.3 17.9 Z" fill="#d4d4d4"/><line x1="5.2" y1="1.2" x2="16.7" y2="12.4" stroke="#d4d4d4" stroke-width="1.8" stroke-linecap="round"/><path d="M17.6 13.4 Q19.3 16.2 19.1 17.6 Q18.8 19.2 17.6 19.2 Q16.4 19.2 16.2 17.6 Q16.1 16.2 17.6 13.4 Z" fill="#d4d4d4"/></svg>
<svg style="left:1341px;top:922px;" width="16" height="19" viewBox="0 0 16 19"><rect x="4.8" y="0.6" width="7" height="2.6" fill="none" stroke="#d4d4d4" stroke-width="1.2"/><rect x="0" y="3" width="15.8" height="2.2" fill="#d4d4d4"/><rect x="1.8" y="6.4" width="12.4" height="11.6" rx="1" fill="#d4d4d4"/></svg>
</body></html>
